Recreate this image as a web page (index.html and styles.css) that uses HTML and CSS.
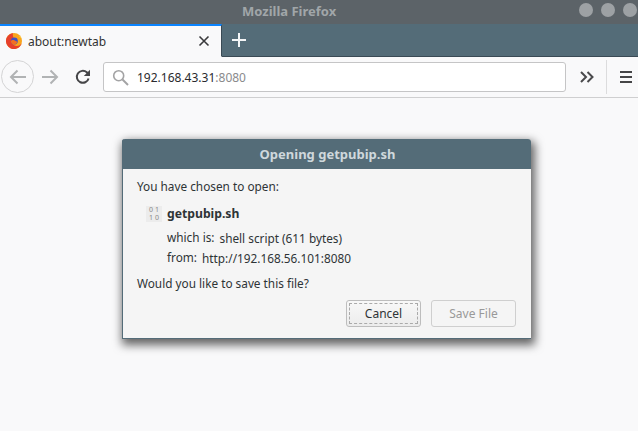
FILE: index.html
```html
<!DOCTYPE html>
<html lang="en">
<head>
<meta charset="utf-8">
<title>Mozilla Firefox</title>
<link rel="stylesheet" href="styles.css">
</head>
<body>
<div class="window">
  <header class="titlebar">
    <span class="title">Mozilla Firefox</span>
    <div class="wm-buttons"><i></i><i></i><i></i></div>
  </header>
  <div class="tabstrip">
    <div class="tab">
      <svg class="favicon" width="16" height="16" viewBox="0 0 16 16">
        <circle cx="8" cy="8" r="8" fill="#f9a51d"/>
        <path d="M7 0A8 8 0 0 0 .4 10.500C1.600 14 4.700 16 8 16c3.700 0 6.800-2.500 7.700-5.800-1 1.600-3 2.900-5.200 2.700C7.500 12.700 5.300 10.500 5.700 8c.2-1.300 1.100-2 2.300-2.500C6.900 4 6.600 1.800 7 0Z" fill="#e6402b"/>
        <circle cx="8.400" cy="8" r="3.400" fill="#4150c0"/>
        <path d="M4.800 8.500c.5-1.500 2-1.800 3.100-1.400 1.400.5 1.900 1.700 3.400 1.300-.2 2.100-1.900 3.400-3.600 3.200-1.500-.2-2.700-1.600-2.900-3.100Z" fill="#f36f21"/>
        <path d="M12.500 1.500c1.800 1.400 3.300 3.800 3.300 6.300 0-1.500-1.100-3.200-2.300-4 .2-.8 0-1.600-1-2.300Z" fill="#fdd742"/>
      </svg>
      <span class="tab-label">about:newtab</span>
      <svg class="tab-close" width="12" height="12" viewBox="0 0 12 12"><path d="M1.500 1.500l9 9M10.500 1.500l-9 9" stroke="#3a3a3c" stroke-width="1.600" fill="none"/></svg>
    </div>
    <svg class="new-tab" width="14" height="14" viewBox="0 0 14 14"><path d="M7 0v14M0 7h14" stroke="#f4f6f7" stroke-width="2" fill="none"/></svg>
  </div>
  <nav class="toolbar">
    <div class="back">
      <svg width="18" height="16" viewBox="0 0 18 16"><path d="M17 8H2M8.500 1.500 2 8l6.500 6.500" stroke="#b1b3b4" stroke-width="2" fill="none"/></svg>
    </div>
    <svg class="forward" width="18" height="16" viewBox="0 0 18 16"><path d="M1 8h15M9.500 1.500 16 8l-6.500 6.500" stroke="#b1b3b4" stroke-width="2" fill="none"/></svg>
    <svg class="reload" width="16" height="16" viewBox="0 0 16 16"><path d="M13.600 9.500A6 6 0 1 1 11.800 3.300L14 5.200" stroke="#454547" stroke-width="2" fill="none"/><path d="M15 .8V7H8.800Z" fill="#454547"/></svg>
    <div class="urlbar">
      <svg width="17" height="17" viewBox="0 0 17 17"><circle cx="6.700" cy="6.700" r="5" stroke="#a3a3a4" stroke-width="1.600" fill="none"/><path d="M10.500 10.500l5.500 5.500" stroke="#a3a3a4" stroke-width="2" fill="none"/></svg>
      <span class="url"><b>192.168.43.31</b>:8080</span>
    </div>
    <svg class="overflow" width="14" height="12" viewBox="0 0 14 12"><path d="M1 1l5 5-5 5M7.500 1l5 5-5 5" stroke="#4a4a4c" stroke-width="2" fill="none"/></svg>
    <div class="divider"></div>
    <svg class="menu" width="12" height="12" viewBox="0 0 12 12"><path d="M0 1h12M0 6h12M0 11h12" stroke="#454547" stroke-width="2" fill="none"/></svg>
  </nav>
  <main class="page"></main>

  <section class="dialog">
    <h1 class="dialog-title">Opening getpubip.sh</h1>
    <div class="dialog-body">
      <p class="intro">You have chosen to open:</p>
      <div class="file">
        <span class="file-icon">0 1<br>1 0</span>
        <strong>getpubip.sh</strong>
      </div>
      <dl class="meta">
        <div class="which"><dt>which is:</dt><dd>shell script (611 bytes)</dd></div>
        <div class="from"><dt>from:</dt><dd>http://192.168.56.101:8080</dd></div>
      </dl>
      <p class="question">Would you like to save this file?</p>
      <div class="actions">
        <button class="btn cancel"><span>Cancel</span></button>
        <button class="btn save" disabled><span>Save File</span></button>
      </div>
    </div>
  </section>
</div>
</body>
</html>
```
FILE: styles.css
```css
* { box-sizing: border-box; }
html, body { margin: 0; height: 100%; overflow: hidden; }
body { font-family: "Noto Sans", sans-serif; font-size: 12px; color: #2e3436; }
.window { position: relative; width: 638px; height: 431px; display: flex; flex-direction: column; background: #f9f9fa; }

.titlebar { height: 24px; flex: none; background: #5c6368; display: flex; align-items: center; padding-left: 242px; position: relative; }
.title { font-size: 13px; font-weight: 700; color: #a1a6a9; position: relative; top: -1px; }
.wm-buttons { position: absolute; right: 1px; top: 3px; display: flex; gap: 8px; }
.wm-buttons i { width: 14px; height: 14px; border-radius: 50%; background: #9da1a4; }

.tabstrip { height: 33px; flex: none; background: #546c78; border-bottom: 1px solid #3a4a55; display: flex; align-items: center; }
.tab { width: 222px; height: 33px; margin-bottom: -1px; background: #f9f9fa; border-top: 2px solid #0a84ff; border-right: 1px solid #3a4a55; border-bottom: 1px solid #f9f9fa; display: flex; align-items: center; padding: 0 11px 0 6px; }
.favicon { flex: none; }
.tab-label { margin-left: 6px; flex: 1; font-size: 12px; color: #333; }
.new-tab { margin-left: 10px; }

.toolbar { height: 41px; flex: none; background: #f9f9fa; border-bottom: 1px solid #cfcfd0; display: flex; align-items: center; padding-left: 1px; }
.back { width: 33px; height: 33px; border: 1px solid #d4d4d5; border-radius: 50%; display: flex; align-items: center; justify-content: center; margin-bottom: 1px; }
.forward { margin-left: 7px; }
.reload { margin-left: 16px; }
.urlbar { width: 463px; height: 30px; margin-left: 12px; background: #fff; border: 1px solid #c5c5c6; border-radius: 3px; display: flex; align-items: center; padding-left: 8px; }
.url { margin-left: 8px; font-size: 12px; color: #8a8a8c; }
.url b { font-weight: 400; color: #2a2a2e; }
.overflow { margin-left: 14px; }
.divider { width: 1px; height: 34px; background: #dcdcdd; margin-left: 12px; }
.menu { margin-left: 13px; }

.page { flex: 1; background: #f9f9fa; }

.dialog { position: absolute; left: 122px; top: 139px; width: 409px; height: 200px; background: #f5f5f5; border-radius: 3px 3px 0 0; border-bottom: 1px solid #546c78; border-left: 1px solid #546c78; box-shadow: 2px 4px 10px 2px rgba(0,0,0,.6); }
.dialog-title { margin: 0 0 0 -1px; height: 30px; padding-left: 2px; background: #546c78; border-radius: 3px 3px 0 0; color: #cfd8dc; font-size: 13px; font-weight: 700; line-height: 30px; text-align: center; }
.dialog-body { padding: 9px 15px 0 14px; }
.intro, .question { margin: 0; font-size: 11.8px; line-height: 17px; }
.file { display: flex; align-items: center; margin: 10px 0 0 9px; height: 17px; }
.file-icon { width: 16px; height: 16px; background: #ececec; color: #888; font-size: 7px; line-height: 8px; text-align: center; }
.file strong { margin-left: 5px; font-size: 12.2px; font-weight: 700; }
.meta { margin: 7px 0 0 30px; }
.meta div { display: flex; height: 20px; line-height: 17px; }
.meta dt { font-size: 11.8px; }
.meta dd { margin: 1px 0 0 5px; font-size: 11.8px; }
.question { margin-top: 6px; }
.actions { display: flex; justify-content: flex-end; gap: 10px; margin-top: 8px; }
.btn { height: 27px; padding: 2px; font: 12px "Noto Sans", sans-serif; border: 1px solid #bdbdbd; border-radius: 3px; background: #f5f5f5; color: #2e3436; }
.btn span { display: flex; width: 100%; height: 100%; align-items: center; justify-content: center; }
.cancel { width: 75px; background: linear-gradient(#f8f8f8, #ececec); }
.cancel span { border: 1px dashed #aaa; }
.save { width: 85px; color: #999; border-color: #cfcfcf; }
```
